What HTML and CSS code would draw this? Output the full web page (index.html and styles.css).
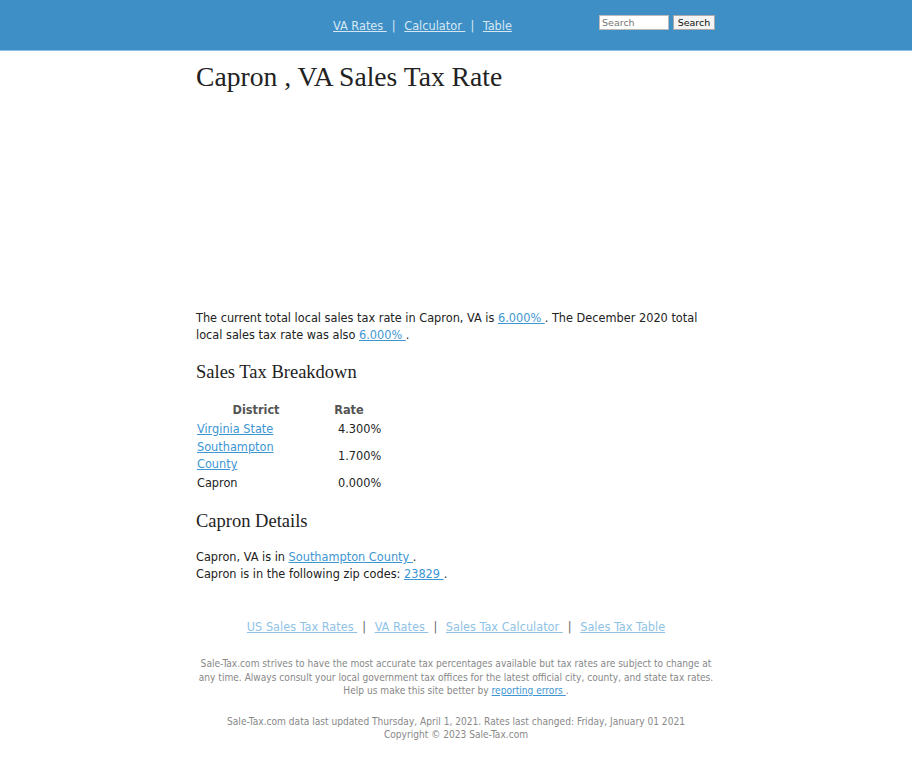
FILE: index.html
```html
<!DOCTYPE html>
<html>
<head>
<meta charset="utf-8">
<link rel="stylesheet" href="styles.css">
</head>
<body>
<header class="topbar">
  <div class="topbar-inner">
    <nav class="topnav">
      <a href="#">VA Rates </a><span class="sep">|</span>
      <a href="#">Calculator </a><span class="sep">|</span>
      <a href="#">Table</a>
    </nav>
    <form class="search">
      <input type="text" placeholder="Search" class="search-input">
      <button type="button" class="search-btn">Search</button>
    </form>
  </div>
</header>
<main class="container">
  <h1 class="title">Capron , VA Sales Tax Rate</h1>
  <div class="ad-space"></div>
  <p class="intro">The current total local sales tax rate in Capron, VA is <a href="#">6.000% </a>. The December 2020 total local sales tax rate was also <a href="#">6.000% </a>.</p>
  <h2 class="section-title">Sales Tax Breakdown</h2>
  <table class="rates">
    <thead>
      <tr><th class="col-district">District</th><th class="col-rate">Rate</th></tr>
    </thead>
    <tbody>
      <tr><td class="district first"><a href="#">Virginia State</a></td><td class="rate first">4.300%</td></tr>
      <tr><td class="district"><a href="#">Southampton County</a></td><td class="rate">1.700%</td></tr>
      <tr><td class="district">Capron</td><td class="rate">0.000%</td></tr>
    </tbody>
  </table>
  <h2 class="section-title details-title">Capron Details</h2>
  <p class="details">Capron, VA is in <a href="#">Southampton County </a>.<br>Capron is in the following zip codes: <a href="#">23829 </a>.</p>
</main>
<footer class="footer">
  <nav class="footnav">
    <a href="#">US Sales Tax Rates </a><span class="sep">|</span>
    <a href="#">VA Rates </a><span class="sep">|</span>
    <a href="#">Sales Tax Calculator </a><span class="sep">|</span>
    <a href="#">Sales Tax Table</a>
  </nav>
  <p class="disclaimer">Sale-Tax.com strives to have the most accurate tax percentages available but tax rates are subject to change at any time. Always consult your local government tax offices for the latest official city, county, and state tax rates. Help us make this site better by <a href="#">reporting errors </a>.</p>
  <p class="updated">Sale-Tax.com data last updated Thursday, April 1, 2021. Rates last changed: Friday, January 01 2021<br>Copyright © 2023 Sale-Tax.com</p>
</footer>
</body>
</html>
```
FILE: styles.css
```css
html, body {
  margin: 0;
  padding: 0;
  background: #fff;
}
body {
  font-family: "DejaVu Sans Condensed", "DejaVu Sans", sans-serif;
  font-stretch: condensed;
  font-size: 12.6px;
  line-height: 17px;
  color: #222;
}
a {
  color: #3d96d2;
}
.topbar {
  background: #3d8fc6;
  height: 50px;
  border-bottom: 1px solid #8cc0e2;
}
.topbar-inner {
  width: 520px;
  margin: 0 auto;
  position: relative;
  height: 50px;
}
.topnav {
  text-align: center;
  padding-top: 17px;
  padding-right: 67px;
  color: #d6e7f4;
}
.topnav a {
  color: #d6e7f4;
}
.topnav .sep {
  margin: 0 5px;
}
.search {
  position: absolute;
  right: 1px;
  top: 15px;
  display: flex;
  gap: 4px;
  margin: 0;
}
.search-input {
  box-sizing: border-box;
  width: 70px;
  height: 15px;
  padding: 0 2px;
  border: 1px solid #bbb;
  font-family: "DejaVu Sans", sans-serif;
  font-size: 9.5px;
  margin: 0;
  outline: none;
}
.search-input::placeholder {
  color: #777;
}
.search-btn {
  box-sizing: border-box;
  height: 15px;
  width: 42px;
  padding: 0;
  font-family: "DejaVu Sans", sans-serif;
  font-size: 9.5px;
  border: 1px solid #aaa;
  background: #f4f4f4;
  color: #111;
  margin: 0;
  line-height: 12px;
}
.container {
  width: 520px;
  margin: 0 auto;
}
.title {
  font-family: "Liberation Serif", serif;
  font-weight: normal;
  font-size: 27.6px;
  line-height: 30px;
  margin: 11px 0 0;
  color: #222;
}
.ad-space {
  height: 217px;
}
.intro {
  margin: 0;
}
.section-title {
  font-family: "Liberation Serif", serif;
  font-weight: normal;
  font-size: 18.5px;
  line-height: 20px;
  margin: 19px 0 19px;
  color: #222;
}
.rates {
  border-collapse: collapse;
  margin: 0;
}
.rates th {
  color: #555;
  font-weight: bold;
  padding: 0 0 1px;
  text-align: center;
}
.rates td {
  padding: 1px 0;
  vertical-align: middle;
}
.rates td.first {
  padding-bottom: 0;
}
.col-district {
  width: 120px;
}
.district {
  width: 120px;
  box-sizing: border-box;
  padding-left: 1px !important;
  padding-right: 8px !important;
}
.col-rate {
  width: 66px;
}
.rates .rate {
  padding-left: 22px;
}
.details-title {
  margin: 19px 0 17px;
}
.details {
  margin: 0;
}
.footer {
  width: 524px;
  margin: 36px auto 0;
  text-align: center;
  padding-bottom: 20px;
}
.footnav {
  color: #666;
}
.footnav a {
  color: #8fc3e6;
}
.footnav .sep {
  margin: 0 5px;
}
.disclaimer, .updated {
  font-size: 10.1px;
  color: #888;
  line-height: 13.5px;
  margin: 22px 0 0;
}
.updated {
  margin-top: 17px;
}
.disclaimer a {
  color: #3d96d2;
}
```
